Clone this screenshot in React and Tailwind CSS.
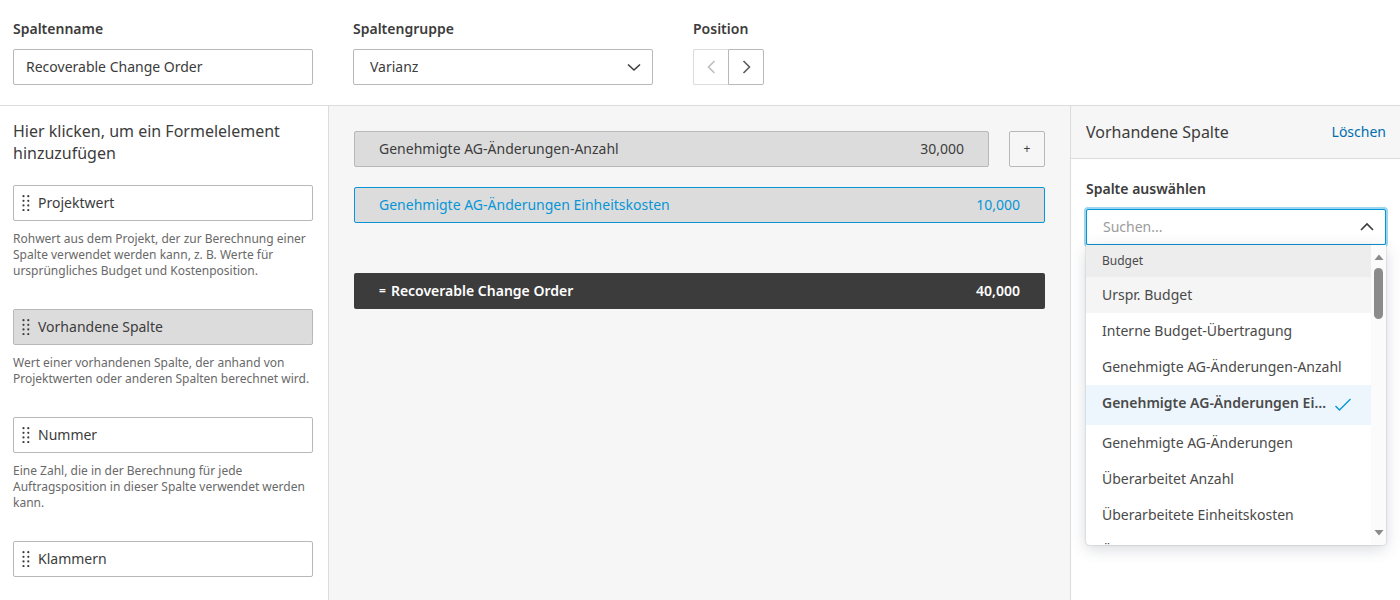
import { useState } from "react";

const elements = [
  {
    name: "Projektwert",
    description:
      "Rohwert aus dem Projekt, der zur Berechnung einer Spalte verwendet werden kann, z. B. Werte für ursprüngliches Budget und Kostenposition.",
  },
  {
    name: "Vorhandene Spalte",
    active: true,
    description:
      "Wert einer vorhandenen Spalte, der anhand von Projektwerten oder anderen Spalten berechnet wird.",
  },
  {
    name: "Nummer",
    description:
      "Eine Zahl, die in der Berechnung für jede Auftragsposition in dieser Spalte verwendet werden kann.",
  },
  { name: "Klammern" },
];

const columns = [
  "Urspr. Budget",
  "Interne Budget-Übertragung",
  "Genehmigte AG-Änderungen-Anzahl",
  "Genehmigte AG-Änderungen Einheitskosten",
  "Genehmigte AG-Änderungen",
  "Überarbeitet Anzahl",
  "Überarbeitete Einheitskosten",
  "Überarbeitetes Budget",
];

function Chevron({ points, className }) {
  return (
    <svg
      viewBox="0 0 16 16"
      className={className}
      fill="none"
      stroke="currentColor"
      strokeWidth="1.6"
      aria-hidden="true"
    >
      <polyline points={points} />
    </svg>
  );
}

function GripIcon() {
  return (
    <svg viewBox="0 0 8 16" className="h-4 w-2 shrink-0" fill="currentColor" aria-hidden="true">
      {[1.2, 5.8, 10.4, 15].map((y) => (
        <g key={y}>
          <circle cx="1.5" cy={y} r="1.1" />
          <circle cx="6.3" cy={y} r="1.1" />
        </g>
      ))}
    </svg>
  );
}

function Header() {
  return (
    <header className="flex flex-wrap gap-x-10 gap-y-4 border-b border-[#dcdcdc] px-[13px] pt-[19px] pb-5">
      <div className="flex w-[300px] flex-col gap-[10px]">
        <label htmlFor="column-name" className="font-semibold">
          Spaltenname
        </label>
        <input
          id="column-name"
          type="text"
          defaultValue="Recoverable Change Order"
          className="h-9 w-full rounded-xs border border-[#b8b8b8] bg-white px-3 pb-[2px] outline-none"
        />
      </div>
      <div className="flex w-[300px] flex-col gap-[10px]">
        <label htmlFor="column-group" className="font-semibold">
          Spaltengruppe
        </label>
        <div className="relative">
          <select
            id="column-group"
            className="h-9 w-full appearance-none rounded-xs border border-[#b8b8b8] bg-white pr-10 pl-4 outline-none"
          >
            <option>Varianz</option>
          </select>
          <Chevron
            points="2,5.5 8,11 14,5.5"
            className="pointer-events-none absolute top-[10px] right-[11px] size-4"
          />
        </div>
      </div>
      <div role="group" aria-labelledby="position-label" className="flex flex-col gap-[10px]">
        <span id="position-label" className="font-semibold">
          Position
        </span>
        <div className="flex">
          <button
            type="button"
            disabled
            aria-label="Nach links"
            className="flex h-9 w-[35px] items-center justify-center rounded-l-xs border border-r-0 border-[#dcdcdc] text-[#bebebe]"
          >
            <Chevron points="11.5,2 5.5,8 11.5,14" className="size-4" />
          </button>
          <button
            type="button"
            aria-label="Nach rechts"
            className="flex size-9 items-center justify-center rounded-r-xs border border-[#b8b8b8] text-[#5c5c5c]"
          >
            <Chevron points="5.5,2 11.5,8 5.5,14" className="size-4" />
          </button>
        </div>
      </div>
    </header>
  );
}

function ElementPalette() {
  return (
    <aside className="w-[329px] shrink-0 border-r border-[#dcdcdc] pt-[14px] pr-[15px] pb-5 pl-[13px]">
      <h2 className="mb-[21px] text-base leading-[22px]">
        Hier klicken, um ein Formelelement hinzuzufügen
      </h2>
      <ul className="flex flex-col gap-[30px]">
        {elements.map((el) => (
          <li key={el.name}>
            <button
              type="button"
              className={`flex h-9 w-full items-center gap-2 rounded-xs border border-[#b8b8b8] px-2 ${
                el.active ? "bg-[#dcdcdc]" : "bg-white"
              }`}
            >
              <GripIcon />
              {el.name}
            </button>
            {el.description && (
              <p className="mt-[10px] text-xs leading-4 text-[#696969]">{el.description}</p>
            )}
          </li>
        ))}
      </ul>
    </aside>
  );
}

function Formula() {
  return (
    <main className="min-w-0 flex-1 bg-[#f6f6f6] p-[25px]">
      <div className="flex gap-5">
        <button
          type="button"
          className="flex h-9 flex-1 items-center justify-between rounded-xs border border-[#b8b8b8] bg-[#dcdcdc] px-6"
        >
          <span>Genehmigte AG-Änderungen-Anzahl</span>
          <span>30,000</span>
        </button>
        <button
          type="button"
          aria-label="Operator: plus"
          className="size-9 rounded-xs border border-[#b8b8b8] text-xs"
        >
          +
        </button>
      </div>
      <button
        type="button"
        className="mt-5 flex h-9 w-full items-center justify-between rounded-xs border border-[#0696d7] bg-[#dcdcdc] px-6 text-[#0696d7]"
      >
        <span>Genehmigte AG-Änderungen Einheitskosten</span>
        <span>10,000</span>
      </button>
      <div className="mt-[50px] flex h-9 items-center justify-between rounded-xs bg-[#3c3c3c] px-[25px] font-semibold text-white">
        <span className="flex items-center gap-[5px]">
          <span className="text-xs">=</span>
          Recoverable Change Order
        </span>
        <span>40,000</span>
      </div>
    </main>
  );
}

function ColumnPicker() {
  const [selected, setSelected] = useState(3);
  return (
    <div className="relative">
      <input
        id="column-search"
        type="text"
        role="combobox"
        aria-expanded="true"
        aria-controls="column-list"
        placeholder="Suchen..."
        className="h-9 w-full rounded-xs border border-[#0696d7] bg-white pr-10 pb-[2px] pl-4 ring-2 ring-[#9bd5ef] outline-none placeholder:text-[#9b9b9b]"
      />
      <Chevron
        points="2,11 8,5 14,11"
        className="pointer-events-none absolute top-[10px] right-[11px] size-4"
      />
      <div className="absolute top-9 right-0 left-0 flex h-[300px] overflow-hidden rounded-b-sm bg-white text-[#4a4a4a] shadow-[0_0_2px_rgba(60,70,90,0.35),0_4px_16px_rgba(60,70,90,0.2)]">
        <ul
          id="column-list"
          role="listbox"
          aria-label="Spalten"
          className="min-w-0 flex-1 overflow-y-auto [scrollbar-width:none]"
        >
          <li role="presentation" className="flex h-8 items-center bg-[#ededed] px-4 text-xs">
            Budget
          </li>
          {columns.map((name, i) => (
            <li
              key={name}
              role="option"
              aria-selected={i === selected}
              onClick={() => setSelected(i)}
              className={`flex cursor-pointer items-center gap-1 pl-4 ${
                i === selected
                  ? "h-10 bg-[#edf6fc] pr-5 pb-1 font-semibold"
                  : i === 0
                    ? "h-9 bg-[#f5f5f5] pr-4"
                    : "h-9 pr-4"
              }`}
            >
              <span className="min-w-0 flex-1 truncate">{name}</span>
              {i === selected && (
                <svg
                  viewBox="0 0 16 16"
                  className="mt-1 size-4 shrink-0 text-[#0696d7]"
                  fill="none"
                  stroke="currentColor"
                  strokeWidth="1.4"
                  aria-hidden="true"
                >
                  <polyline points="0.5,9 4.5,13 15.5,2" />
                </svg>
              )}
            </li>
          ))}
        </ul>
        <div
          aria-hidden="true"
          className="flex w-[15px] shrink-0 flex-col items-center bg-[#fbfbfb] py-2 text-[#8b8b8b]"
        >
          <svg viewBox="0 0 10 8" className="h-2 w-[10px] shrink-0" fill="currentColor">
            <path d="M0.5 7 5 1.5 9.5 7z" />
          </svg>
          <div className="mt-[7px] h-[51px] w-[9px] rounded-full bg-[#8b8b8b]" />
          <svg viewBox="0 0 10 8" className="mt-auto h-2 w-[10px] shrink-0" fill="currentColor">
            <path d="M0.5 1 5 6.5 9.5 1z" />
          </svg>
        </div>
      </div>
    </div>
  );
}

function DetailPanel() {
  return (
    <aside className="w-[330px] shrink-0 border-l border-[#dcdcdc] bg-white">
      <div className="flex h-[53px] items-center justify-between border-b border-[#dcdcdc] bg-[#f6f6f6] pr-[14px] pl-[15px]">
        <h2 className="text-base leading-[22px]">Vorhandene Spalte</h2>
        <a href="#loeschen" className="text-[#006eaf]">
          Löschen
        </a>
      </div>
      <div className="flex flex-col gap-[10px] pt-5 pr-[14px] pl-[15px]">
        <label htmlFor="column-search" className="font-semibold">
          Spalte auswählen
        </label>
        <ColumnPicker />
      </div>
    </aside>
  );
}

export default function App() {
  return (
    <div className="flex min-h-screen flex-col bg-white font-['Noto_Sans',sans-serif] text-sm text-[#3c3c3c]">
      <Header />
      <div className="flex flex-1">
        <ElementPalette />
        <Formula />
        <DetailPanel />
      </div>
    </div>
  );
}
